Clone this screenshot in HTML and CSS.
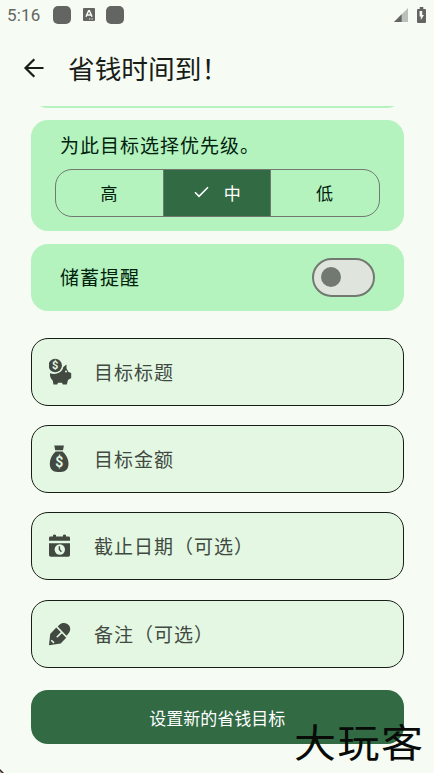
FILE: index.html
```html
<!DOCTYPE html>
<html lang="zh-CN">
<head>
<meta charset="utf-8">
<title>省钱时间到！</title>
<link rel="stylesheet" href="styles.css">
</head>
<body>
<div class="screen">
  <header class="status">
    <span class="clock">5:16</span>
    <i class="app-dot"></i>
    <svg class="lang" width="12" height="13" viewBox="0 0 12 13"><rect width="12" height="13" rx="1" fill="#626561"/><path d="M3 8.700 5.600 2.800h.8L9 8.700M4 6.900h4" fill="none" stroke="#f6fbf3" stroke-width="1.500"/><path d="M6 11h1.300M8.500 11h1.300" stroke="#f6fbf3"/></svg>
    <i class="app-dot"></i>
    <svg class="signal" width="14" height="14" viewBox="0 0 14 14"><path d="M14 0v14H0z" fill="#bcc0ba"/><path d="M7.700 6.300V14H0z" fill="#626561"/></svg>
    <svg class="battery" width="9" height="16" viewBox="0 0 9 16"><path d="M2.700 0h3.600v2H8q1 0 1 1v12q0 1-1 1H1q-1 0-1-1V3q0-1 1-1h1.700z" fill="#626561"/><path d="M5.200 4v4H7L3.800 13V9.500H2.600V4z" fill="#f6fbf3"/></svg>
  </header>
  <div class="toolbar">
    <svg width="22" height="22" viewBox="0 0 22 22"><path d="M20.500 11H3M11.300 2.200 2.500 11l8.800 8.800" fill="none" stroke="#181d18" stroke-width="2.200"/></svg>
    <h1>省钱时间到！</h1>
  </div>
  <main>
    <div class="scrolled"><div class="previous"></div></div>
    <section class="card priority">
      <p>为此目标选择优先级。</p>
      <div class="segments">
        <span>高</span>
        <span class="selected"><svg width="15" height="12" viewBox="0 0 15 12"><path d="m1 6.300 4 4L14 1.300" fill="none" stroke="#fff" stroke-width="1.600"/></svg>中</span>
        <span>低</span>
      </div>
    </section>
    <section class="card reminder"><p>储蓄提醒</p><div class="switch"><i></i></div></section>
    <div class="fields">
      <div class="field">
        <svg width="26" height="28" viewBox="0 0 26 28"><g fill="#414941"><circle cx="6.200" cy="7.500" r="6.700"/><path d="M1 15.300c3.800 1.200 8.800.7 11.500-2.500 1.100-1.300 1.700-2.500 1.800-3.800l3.200-2.600v4l2 3.700 2.700 1v5l-3.200 2-1.200 4.300h-4l-.8-1.600H9l-.8 1.600H4.500l-.8-3.800C1.600 20.900.6 18 1 15.300z"/></g><circle cx="17" cy="13.500" r="1" fill="#e3f7e3"/><text x="6.200" y="11.400" class="coin">$</text></svg>
        <span>目标标题</span>
      </div>
      <div class="field">
        <svg width="26" height="28" viewBox="0 0 26 28"><g fill="#414941"><path d="M5.300.5h9.600L14 5.300H6.200zM6.700 6.500h6.800c3.600 3.100 6 7.500 6 12 0 5.600-2.900 8.500-8 8.500H8.800c-5.100 0-8-2.900-8-8.500 0-4.500 2.300-8.900 5.900-12z"/></g><text x="10.200" y="21.800" class="bag">$</text></svg>
        <span>目标金额</span>
      </div>
      <div class="field">
        <svg width="26" height="28" viewBox="0 0 26 28"><path d="M0 11.200h21v11.700q0 1.800-1.800 1.800H1.800Q0 24.700 0 22.900zM0 8.700V5.900q0-1.400 1.400-1.400H4V3.100q1.500-1.400 3 0v1.400h7V3.100q1.500-1.400 3 0v1.400h2.600q1.400 0 1.400 1.400v2.800z" fill="#414941"/><circle cx="10.800" cy="17.500" r="5.200" fill="#e3f7e3"/><path d="M10.400 14.200v3.300l2 2.300" fill="none" stroke="#414941" stroke-width="1.400"/></svg>
        <span>截止日期（可选）</span>
      </div>
      <div class="field">
        <svg width="26" height="28" viewBox="0 0 26 28"><g fill="#414941"><path d="M8.700 6.400 11 4.300C14.200 1.700 19 3 20.700 6.500c1.100 2.700.4 5.500-1.700 7.500l-1.500 1.700z"/><path d="M7.300 7.500 17.200 17.700 11.700 23.600 0 25.200 1.200 14z"/></g><path d="m2.300 20.200 2.700 2.700M7.800 17.300l5.200-5.200" stroke="#e3f7e3" stroke-width="1.600"/></svg>
        <span>备注（可选）</span>
      </div>
    </div>
    <button>设置新的省钱目标</button>
  </main>
  <div class="watermark">大玩客</div>
  <svg class="corner" width="4" height="4" viewBox="0 0 4 4"><path d="M0 0 4 4H0z" fill="#282b38"/><path d="M0 2l2 2H0z" fill="#dba879"/></svg>
</div>
</body>
</html>
```
FILE: styles.css
```css
* { box-sizing: border-box; }
body { margin: 0; background: #f6fbf3; font-family: Roboto, "Noto Sans CJK SC", sans-serif; color: #181d18; }
.screen { position: relative; width: 434px; height: 773px; overflow: hidden; }
svg { display: block; flex: none; }
h1, p { margin: 0; font-weight: 400; white-space: nowrap; }
.status { display: flex; align-items: center; height: 29px; padding: 0 8px 0 7px; color: #626561; }
.clock { width: 46px; font-size: 17px; line-height: 29px; padding-top: 2px; letter-spacing: .2px; }
.app-dot { width: 18px; height: 18px; border-radius: 5px; background: #626561; }
.lang { margin: 0 11px 0 12px; }
.signal { margin-left: auto; margin-top: 1px; }
.battery { margin-left: 9px; }
.toolbar { display: flex; align-items: center; height: 77px; padding-left: 23px; }
h1 { margin-left: 23px; font-size: 26.7px; line-height: 40px; padding-top: 4px; }
main { padding: 0 30px 0 30.500px; }
.scrolled { height: 14px; overflow: hidden; }
.previous { height: 60px; margin-top: -58px; border-radius: 17px; background: #b4f2be; }
.card { border-radius: 17px; background: #b4f2be; color: #00210d; font-size: 19px; letter-spacing: 1px; }
.priority { height: 111.300px; padding: 12px 24px 0; }
.priority p { padding-left: 5.500px; line-height: 29px; }
.segments { display: grid; grid-template-columns: repeat(3, 1fr); height: 48px; margin-top: 8px; border: 1.500px solid #717971; border-radius: 17px; overflow: hidden; font-size: 17px; letter-spacing: 0; }
.segments span { display: flex; align-items: center; justify-content: center; padding-right: 1px; padding-bottom: 2px; }
.segments .selected { background: #316a43; color: #fff; border: solid #717971; border-width: 0 1px; gap: 15px; padding-right: 0; }
.reminder { display: flex; align-items: center; justify-content: space-between; height: 67px; margin-top: 12.500px; padding: 0 29px 0 29.500px; }
.reminder p { line-height: 28px; padding-top: 4px; }
.switch { display: flex; align-items: center; width: 63px; height: 39px; padding-left: 7px; border: 2.500px solid #717971; border-radius: 20px; background: #dfe4dc; }
.switch i { width: 20px; height: 20px; border-radius: 50%; background: #717971; }
.fields { display: grid; gap: 19.300px; margin-top: 27px; }
.field { display: flex; align-items: center; height: 68px; padding: 0 17px; border: 1.400px solid #181d18; border-radius: 17px; background: #e3f7e3; color: #414941; }
.field span { margin-left: 19.500px; padding-bottom: 1px; font-size: 19px; letter-spacing: 1px; white-space: nowrap; }
.coin, .bag { font-family: Roboto, sans-serif; font-size: 11px; font-weight: 700; text-anchor: middle; fill: #e3f7e3; }
.bag { font-size: 14px; }
button { display: flex; align-items: center; justify-content: center; width: 100%; height: 54px; margin-top: 22px; padding: 2px 0 0; border: 0; border-radius: 17px; background: #316a43; color: #fff; font: 400 17px Roboto, "Noto Sans CJK SC", sans-serif; }
.watermark { position: absolute; left: 294px; top: 717px; font: 400 42px/46px "Noto Sans CJK SC", sans-serif; letter-spacing: 1.500px; color: #080b08; white-space: nowrap; transform: scaleY(.93); }
.corner { position: absolute; left: 0; bottom: 0; }
```
